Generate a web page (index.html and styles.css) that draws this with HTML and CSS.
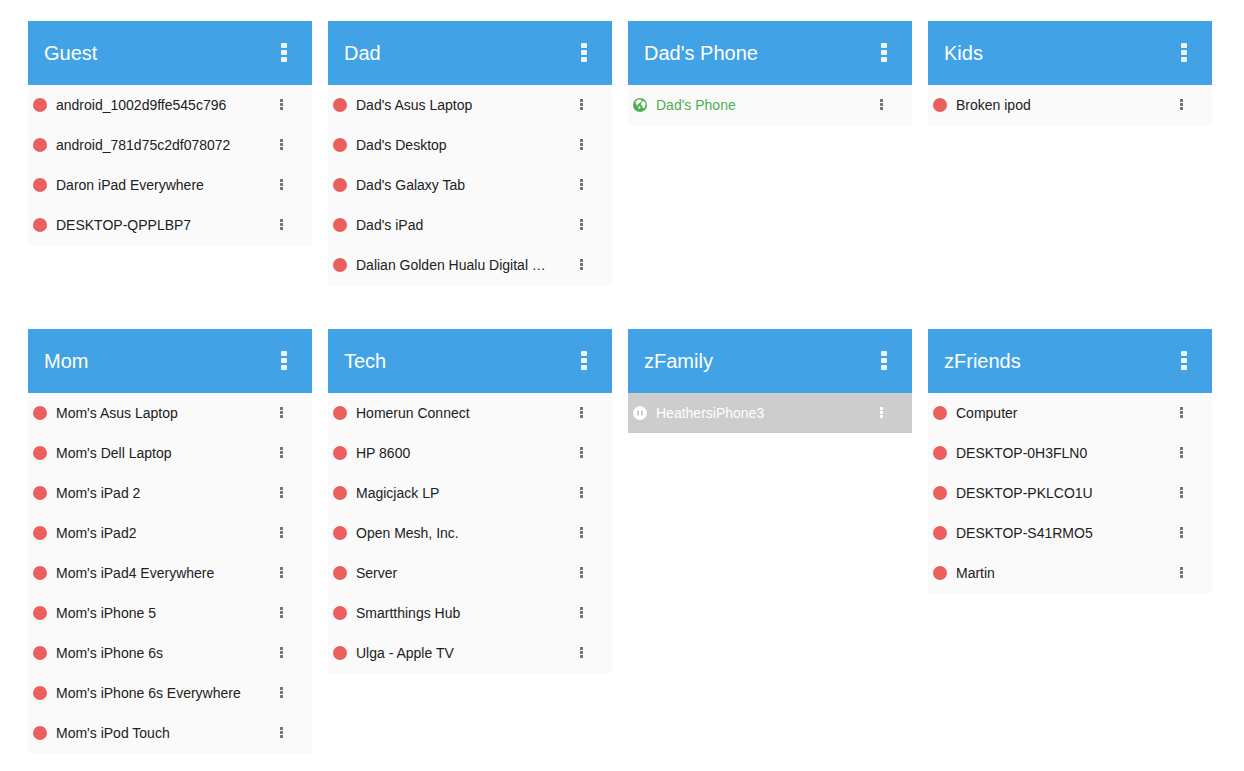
FILE: index.html
```html
<!DOCTYPE html>
<html lang="en">
<head>
    <meta charset="UTF-8">
    <meta name="viewport" content="width=device-width, initial-scale=1.0">
    <title>Devices</title>
    <link rel="stylesheet" href="styles.css">
</head>
<body>
    <!-- Shared icons -->
    <svg class="sprite" width="0" height="0" aria-hidden="true">
        <symbol id="dots" viewBox="0 0 6 20">
            <rect x="0" y="0" width="6" height="5" rx="1"/>
            <rect x="0" y="7" width="6" height="5" rx="1"/>
            <rect x="0" y="14" width="6" height="5" rx="1"/>
        </symbol>
        <symbol id="dots-small" viewBox="0 0 4 12">
            <rect x="0" y="0" width="3" height="3"/>
            <rect x="0" y="4" width="3" height="3"/>
            <rect x="0" y="8" width="3" height="3"/>
        </symbol>
        <symbol id="offline" viewBox="0 0 14 14">
            <circle cx="7" cy="7" r="7"/>
        </symbol>
        <symbol id="online" viewBox="0 0 14 14">
            <circle cx="7" cy="7" r="7"/>
            <path class="cutout" d="M3.6 2.4 5.4 1.4 7.6 1.6 8.6 2.6 8 4 6.6 5 5.8 6 4.4 6.4 5.2 7.6 3.8 7.2 2.8 5.8 2.6 4z"/>
            <path class="cutout" d="M9.6 3 11.6 3.4 12.6 5.4 12.4 7.4 11.6 9.4 10.2 10.6 9.4 9 9 7.6 7.8 6.8 8.2 5.2z"/>
            <path class="cutout" d="M5.4 8.2 7.2 8.6 7.6 9.6 6.6 10.8 6.2 11.6 5.6 10z"/>
        </symbol>
        <symbol id="paused" viewBox="0 0 14 14">
            <circle cx="7" cy="7" r="7"/>
            <path class="cutout" d="M4 4.5h2v5H4zM8 4.5h2v5H8z"/>
        </symbol>
    </svg>

    <main id="groups" class="groups"></main>

    <script>
        const groups = [
            { name: 'Guest', devices: ['android_1002d9ffe545c796', 'android_781d75c2df078072', 'Daron iPad Everywhere', 'DESKTOP-QPPLBP7'] },
            { name: 'Dad', devices: ["Dad's Asus Laptop", "Dad's Desktop", "Dad's Galaxy Tab", "Dad's iPad", 'Dalian Golden Hualu Digital Technology'] },
            { name: "Dad's Phone", status: 'online', devices: ["Dad's Phone"] },
            { name: 'Kids', devices: ['Broken ipod'] },
            { name: 'Mom', devices: ["Mom's Asus Laptop", "Mom's Dell Laptop", "Mom's iPad 2", "Mom's iPad2", "Mom's iPad4 Everywhere", "Mom's iPhone 5", "Mom's iPhone 6s", "Mom's iPhone 6s Everywhere", "Mom's iPod Touch"] },
            { name: 'Tech', devices: ['Homerun Connect', 'HP 8600', 'Magicjack LP', 'Open Mesh, Inc.', 'Server', 'Smartthings Hub', 'Ulga - Apple TV'] },
            { name: 'zFamily', status: 'paused', devices: ['HeathersiPhone3'] },
            { name: 'zFriends', devices: ['Computer', 'DESKTOP-0H3FLN0', 'DESKTOP-PKLCO1U', 'DESKTOP-S41RMO5', 'Martin'] }
        ];

        function deviceRow(name, status) {
            return `
                <li class="device ${status}">
                    <svg class="status" role="img" aria-label="${status}"><use href="#${status}"/></svg>
                    <span class="device-name">${name}</span>
                    <button type="button" class="device-menu" aria-label="${name} menu">
                        <svg width="4" height="12"><use href="#dots-small"/></svg>
                    </button>
                </li>`;
        }

        document.getElementById('groups').innerHTML = groups.map(group => `
            <section class="group">
                <header class="group-header">
                    <h2>${group.name}</h2>
                    <button type="button" class="group-menu" aria-label="${group.name} group menu">
                        <svg width="6" height="20"><use href="#dots"/></svg>
                    </button>
                </header>
                <ul>${group.devices.map(name => deviceRow(name, group.status || 'offline')).join('')}</ul>
            </section>`).join('');
    </script>
</body>
</html>
```
FILE: styles.css
```css
* {
    margin: 0;
    padding: 0;
    box-sizing: border-box;
}

body {
    background-color: #fff;
    color: #212121;
    font-family: "Liberation Sans", Arial, sans-serif;
    font-size: 14px;
    line-height: 20px;
}

.sprite {
    position: absolute;
}

/* Group grid */
.groups {
    display: grid;
    grid-template-columns: repeat(4, minmax(0, 1fr));
    gap: 44px 16px;
    align-items: start;
    padding: 21px 32px 18px 28px;
}

.group {
    background-color: #fafafa;
}

.group-header {
    display: flex;
    align-items: center;
    justify-content: space-between;
    height: 64px;
    padding: 0 16px;
    background-color: #42a2e6;
    color: #fff;
}

h2 {
    font-size: 20px;
    font-weight: normal;
    line-height: 24px;
}

button {
    display: flex;
    align-items: center;
    justify-content: center;
    flex: none;
    width: 24px;
    height: 24px;
    border: none;
    background: none;
    color: inherit;
    cursor: pointer;
}

button svg {
    fill: currentColor;
}

.group-menu {
    opacity: 0.9;
}

/* Device rows */
ul {
    list-style: none;
}

.device {
    display: flex;
    align-items: center;
    height: 40px;
    padding: 0 18px 0 5px;
}

.status {
    flex: none;
    width: 14px;
    height: 14px;
    margin-right: 9px;
    fill: currentColor;
}

.device-name {
    flex: 1;
    margin-right: 20px;
    overflow: hidden;
    text-overflow: ellipsis;
    white-space: nowrap;
}

.device-menu {
    color: #757575;
}

.cutout {
    fill: #fafafa;
}

.offline .status {
    color: #ec5f5f;
}

.online {
    color: #4caf50;
}

.online .device-menu {
    color: #757575;
}

.paused {
    background-color: #cdcdcd;
    color: #fff;
}

.paused .device-menu {
    color: #fff;
}

#paused .cutout {
    fill: #cdcdcd;
}
```
